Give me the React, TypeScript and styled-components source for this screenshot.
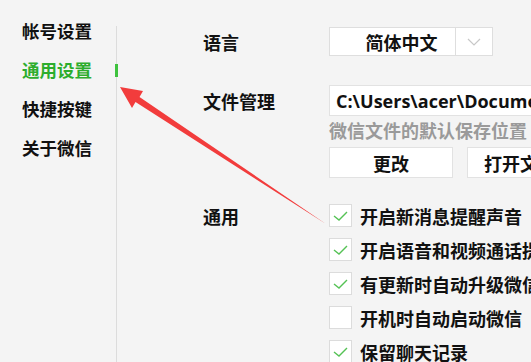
import React from "react";
import styled, { createGlobalStyle } from "styled-components";

const GlobalStyle = createGlobalStyle`
  html, body {
    margin: 0;
    padding: 0;
    background: #f4f4f4;
    overflow: hidden;
  }
  body {
    font-family: "Noto Sans", "Noto Sans CJK SC", sans-serif;
    color: #111;
  }
`;

const Page = styled.div`
  position: relative;
  width: 531px;
  height: 362px;
  display: flex;
  overflow: hidden;
  background: #f4f4f4;
`;

const Sidebar = styled.nav`
  width: 116px;
  margin-top: 26px;
  border-right: 1px solid #dcdcdc;
  display: flex;
  flex-direction: column;
  gap: 21px;
  flex-shrink: 0;
`;

const NavItem = styled.div<{ $active?: boolean; $first?: boolean }>`
  position: relative;
  margin-top: ${(p) => (p.$first ? "-4px" : "0")};
  padding-left: 22px;
  height: 18px;
  line-height: 18px;
  font-family: "Noto Sans CJK SC", sans-serif;
  font-size: 17.5px;
  font-weight: 700;
  color: ${(p) => (p.$active ? "#2dad2d" : "#111")};
`;

const ActiveMark = styled.span`
  position: absolute;
  right: -2px;
  top: 3px;
  width: 3px;
  height: 13px;
  background: #3ec23e;
`;

const Main = styled.div`
  flex: 1;
  padding: 27px 0 0 86px;
  display: flex;
  flex-direction: column;
  min-width: 0;
`;

const Row = styled.div<{ $mt?: number }>`
  display: grid;
  grid-template-columns: 126px auto;
  margin-top: ${(p) => p.$mt ?? 0}px;
`;

const Label = styled.div<{ $h: number }>`
  height: ${(p) => p.$h}px;
  display: flex;
  align-items: center;
  font-family: "Noto Sans CJK SC", sans-serif;
  font-size: 18px;
  font-weight: 700;
  color: #111;
  white-space: nowrap;
`;

const Select = styled.div`
  width: 164px;
  height: 29px;
  box-sizing: border-box;
  border: 1px solid #dedede;
  background: #fff;
  display: flex;
`;

const SelectValue = styled.div`
  width: 126px;
  display: flex;
  align-items: center;
  justify-content: center;
  padding-left: 18px;
  box-sizing: border-box;
  font-family: "Noto Sans CJK SC", sans-serif;
  font-size: 18px;
  font-weight: 700;
  border-right: 1px solid #dedede;
`;

const SelectArrow = styled.div`
  flex: 1;
  display: flex;
  align-items: center;
  justify-content: center;
`;

const Column = styled.div`
  display: flex;
  flex-direction: column;
`;

const PathBox = styled.div`
  width: 260px;
  height: 31px;
  box-sizing: border-box;
  border: 1px solid #e2e2e2;
  background: #fff;
  padding-left: 6px;
  display: flex;
  align-items: center;
  font-family: "Open Sans", "Noto Sans", sans-serif;
  font-size: 18px;
  font-weight: 700;
  white-space: nowrap;
  overflow: hidden;
`;

const Hint = styled.div`
  margin-top: 5px;
  height: 18px;
  line-height: 18px;
  font-family: "Noto Sans CJK SC", sans-serif;
  font-size: 18px;
  font-weight: 700;
  color: #9a9a9a;
  white-space: nowrap;
`;

const Buttons = styled.div`
  margin-top: 8px;
  display: flex;
  gap: 14px;
`;

const Button = styled.div`
  width: 124px;
  height: 31px;
  flex-shrink: 0;
  box-sizing: border-box;
  border: 1px solid #e2e2e2;
  background: #fff;
  display: flex;
  align-items: center;
  justify-content: center;
  font-family: "Noto Sans CJK SC", sans-serif;
  font-size: 18px;
  font-weight: 700;
  white-space: nowrap;
  overflow: hidden;
`;

const Checks = styled.div`
  display: flex;
  flex-direction: column;
  gap: 11px;
`;

const CheckRow = styled.div`
  display: flex;
  align-items: center;
  gap: 8px;
  height: 23px;
  white-space: nowrap;
`;

const Box = styled.div`
  width: 23px;
  height: 23px;
  flex-shrink: 0;
  box-sizing: border-box;
  border: 1px solid #dcdcdc;
  background: #fff;
`;

const CheckText = styled.span`
  font-family: "Noto Sans CJK SC", sans-serif;
  font-size: 18px;
  font-weight: 700;
  color: #111;
`;

const Overlay = styled.svg`
  position: absolute;
  left: 0;
  top: 0;
  pointer-events: none;
`;

const Check = ({ on, text }: { on: boolean; text: string }) => (
  <CheckRow>
    <Box>
      {on && (
        <svg width="21" height="21" viewBox="0 0 21 21">
          <polyline
            points="4,11 9,15 17,7"
            fill="none"
            stroke="#55c255"
            strokeWidth="1.4"
          />
        </svg>
      )}
    </Box>
    <CheckText>{text}</CheckText>
  </CheckRow>
);

export default function App() {
  return (
    <>
      <GlobalStyle />
      <Page>
        <Sidebar>
          <NavItem $first>帐号设置</NavItem>
          <NavItem $active>
            通用设置
            <ActiveMark />
          </NavItem>
          <NavItem>快捷按键</NavItem>
          <NavItem>关于微信</NavItem>
        </Sidebar>
        <Main>
          <Row>
            <Label $h={29}>语言</Label>
            <Select>
              <SelectValue>简体中文</SelectValue>
              <SelectArrow>
                <svg width="14" height="8" viewBox="0 0 14 8">
                  <polyline
                    points="1,1 7,7 13,1"
                    fill="none"
                    stroke="#c8c8c8"
                    strokeWidth="1.2"
                  />
                </svg>
              </SelectArrow>
            </Select>
          </Row>
          <Row $mt={29}>
            <Label $h={31}>文件管理</Label>
            <Column>
              <PathBox>C:\Users\acer\Documents\WeChat Files</PathBox>
              <Hint>微信文件的默认保存位置</Hint>
              <Buttons>
                <Button>更改</Button>
                <Button>打开文件夹</Button>
              </Buttons>
            </Column>
          </Row>
          <Row $mt={26}>
            <Label $h={23}>通用</Label>
            <Checks>
              <Check on text="开启新消息提醒声音" />
              <Check on text="开启语音和视频通话提醒" />
              <Check on text="有更新时自动升级微信" />
              <Check on={false} text="开机时自动启动微信" />
              <Check on text="保留聊天记录" />
            </Checks>
          </Row>
        </Main>
        <Overlay width="531" height="362" viewBox="0 0 531 362">
          <polygon
            points="120,87 143,91 139.5,97 326,224 135.5,102 132,108"
            fill="#f23c3c"
          />
        </Overlay>
      </Page>
    </>
  );
}
